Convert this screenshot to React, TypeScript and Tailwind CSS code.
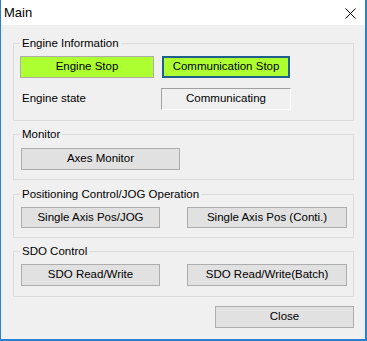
import React from "react";

const font = { fontFamily: '"Liberation Sans", Arial, sans-serif' };

function Btn({
  w,
  h = 22,
  children,
  green,
  focused,
}: {
  w: number;
  h?: number;
  children: React.ReactNode;
  green?: boolean;
  focused?: boolean;
}) {
  const base = "flex items-center justify-center text-[11.5px] leading-none text-black shrink-0";
  const look = focused
    ? "bg-[#adff2f] border-2 border-[#1f5f8e]"
    : green
    ? "bg-[#adff2f] border border-[#adadad]"
    : "bg-[#e1e1e1] border border-[#adadad]";
  return (
    <div className={`${base} ${look}`} style={{ width: w, height: h }}>
      {children}
    </div>
  );
}

function Group({
  label,
  className,
  children,
}: {
  label: string;
  className: string;
  children: React.ReactNode;
}) {
  return (
    <div className={`relative ml-[12px] w-[341px] border border-[#dcdcdc] ${className}`}>
      <div className="absolute left-[6px] top-[-8px] bg-[#f0f0f0] px-[2px] text-[11.5px] leading-[14px] text-black whitespace-nowrap">
        {label}
      </div>
      {children}
    </div>
  );
}

export default function App() {
  return (
    <div
      className="w-[367px] h-[341px] flex flex-col border-l border-r-2 border-b-2 border-[#2b7fd0] bg-[#f0f0f0] overflow-hidden"
      style={font}
    >
      <div className="h-[25px] shrink-0 bg-white flex items-center justify-between pl-[3px] pr-[9px]">
        <span className="text-[13px] text-black leading-none">Main</span>
        <svg width="11" height="11" viewBox="0 0 11 11" className="mt-[1px]">
          <path d="M0.5 0.5 L10.5 10.5 M10.5 0.5 L0.5 10.5" stroke="#000" strokeWidth="1" />
        </svg>
      </div>

      <div className="flex flex-col pt-[18px]">
        <Group label="Engine Information" className="pt-[12px] pb-[10px] pl-[6px]">
          <div className="flex gap-[8px]">
            <Btn w={134} green>Engine Stop</Btn>
            <Btn w={128} focused>Communication Stop</Btn>
          </div>
          <div className="flex items-center mt-[10px] h-[22px]">
            <span className="w-[141px] pl-[2px] text-[11.5px] text-black">Engine state</span>
            <div className="w-[130px] h-[22px] flex items-center justify-center border-t border-l border-[#a0a0a0] border-r border-b border-r-white border-b-white text-[11.5px] text-black">
              Communicating
            </div>
          </div>
        </Group>

        <Group label="Monitor" className="mt-[13px] pt-[13px] pb-[9px] pl-[7px]">
          <Btn w={159}>Axes Monitor</Btn>
        </Group>

        <Group label="Positioning Control/JOG Operation" className="mt-[14px] pt-[12px] pb-[9px] pl-[7px]">
          <div className="flex gap-[27px]">
            <Btn w={139} h={21}>Single Axis Pos/JOG</Btn>
            <Btn w={160} h={21}>Single Axis Pos (Conti.)</Btn>
          </div>
        </Group>

        <Group label="SDO Control" className="mt-[13px] pt-[12px] pb-[10px] pl-[7px]">
          <div className="flex gap-[27px]">
            <Btn w={139}>SDO Read/Write</Btn>
            <Btn w={160}>SDO Read/Write(Batch)</Btn>
          </div>
        </Group>

        <div className="mt-[9px] ml-[214px]">
          <Btn w={139}>Close</Btn>
        </div>
      </div>
    </div>
  );
}
